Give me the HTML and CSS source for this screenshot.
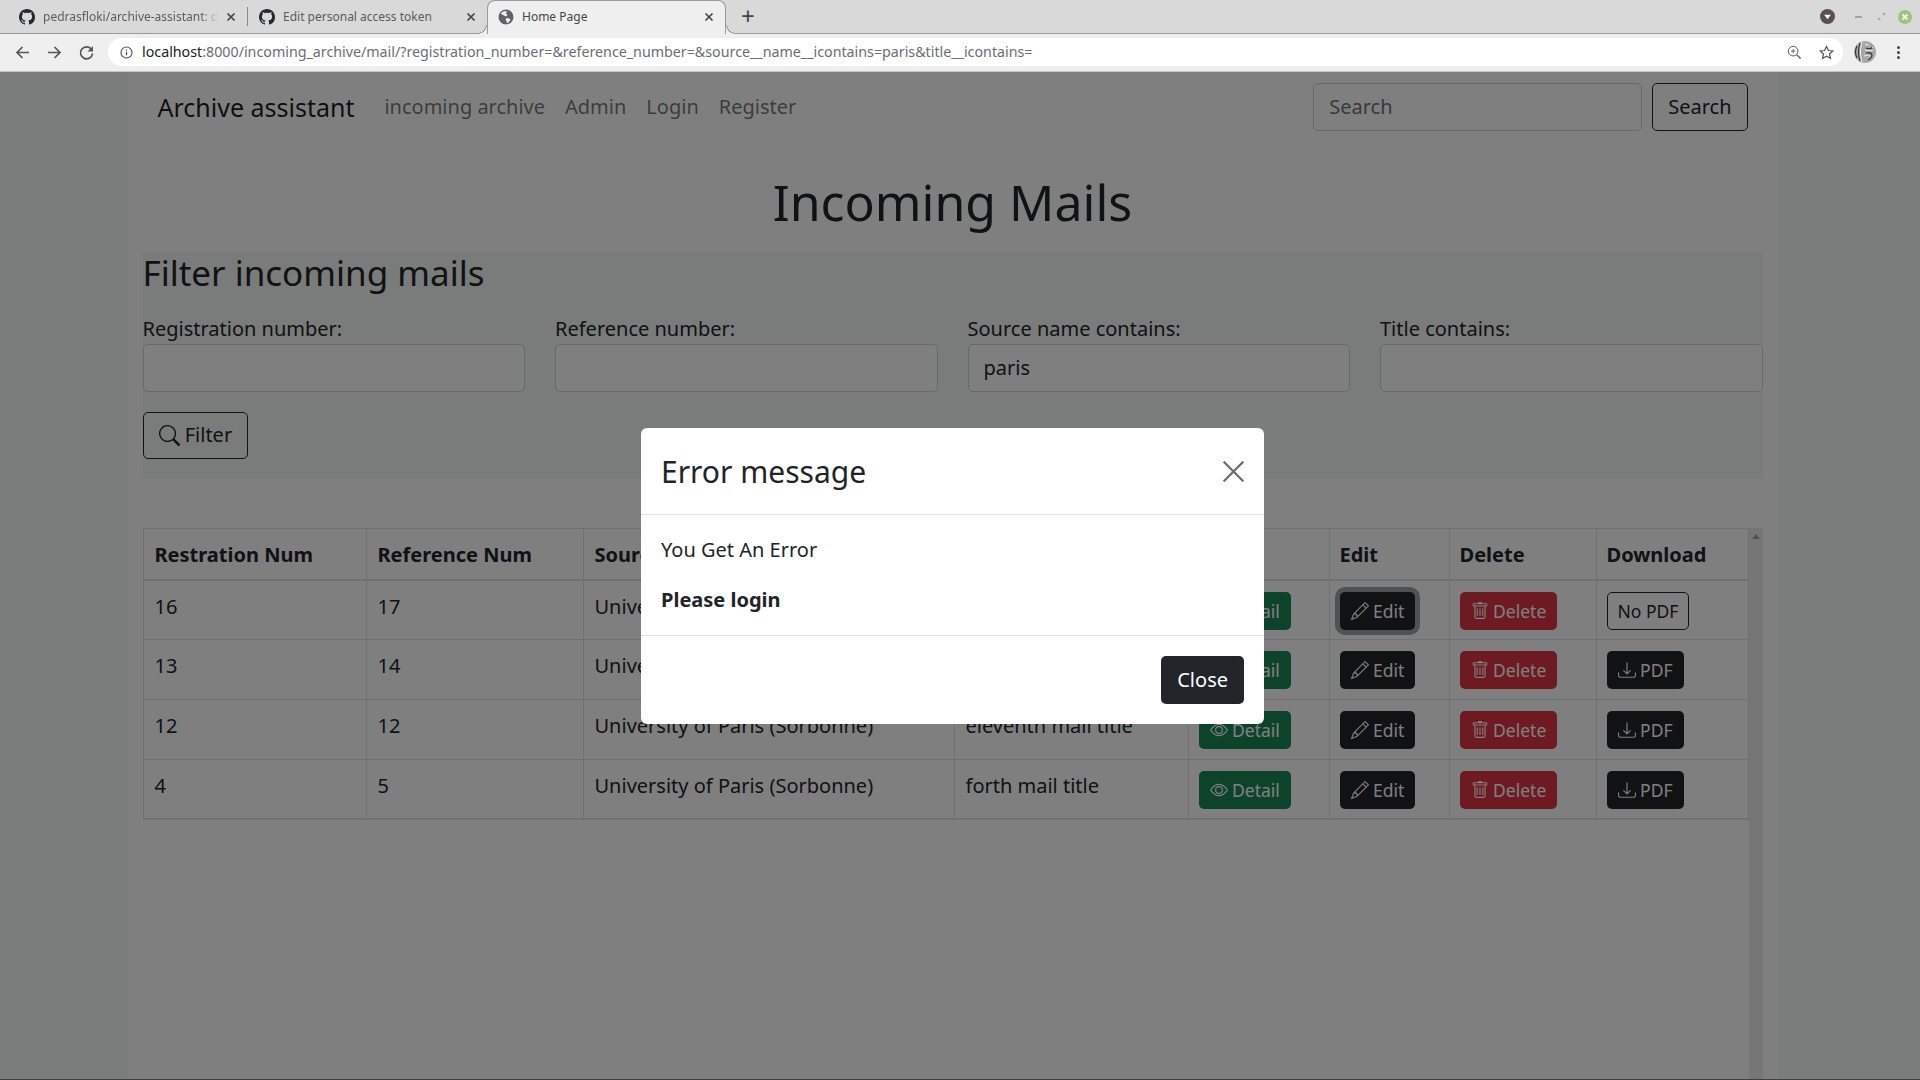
FILE: index.html
```html
<!DOCTYPE html>
<html lang="en">
<head>
  <meta charset="UTF-8">
  <title>Home Page</title>
  <link rel="stylesheet" href="styles.css">
</head>
<body>
  <svg class="sprites" width="0" height="0">
    <symbol id="i-github" viewBox="0 0 16 16"><path d="M8 0C3.58 0 0 3.58 0 8c0 3.54 2.29 6.53 5.47 7.59.4.07.55-.17.55-.38 0-.19-.01-.82-.01-1.49-2.01.37-2.53-.49-2.69-.94-.09-.23-.48-.94-.82-1.13-.28-.15-.68-.52-.01-.53.63-.01 1.08.58 1.23.82.72 1.21 1.87.87 2.33.66.07-.52.28-.87.51-1.07-1.78-.2-3.64-.89-3.64-3.95 0-.87.31-1.59.82-2.15-.08-.2-.36-1.02.08-2.12 0 0 .67-.21 2.2.82.64-.18 1.32-.27 2-.27.68 0 1.36.09 2 .27 1.53-1.04 2.2-.82 2.2-.82.44 1.1.16 1.92.08 2.12.51.56.82 1.27.82 2.15 0 3.07-1.87 3.75-3.65 3.95.29.25.54.73.54 1.48 0 1.07-.01 1.93-.01 2.2 0 .21.15.46.55.38A8.013 8.013 0 0016 8c0-4.42-3.58-8-8-8z"/></symbol>
    <symbol id="i-close" viewBox="0 0 10 10"><path d="M1.500 1.500l7 7M8.500 1.500l-7 7" fill="none" stroke="#444" stroke-width="1.700"/></symbol>
    <symbol id="i-search" viewBox="0 0 16 16"><path d="M11.742 10.344a6.5 6.5 0 1 0-1.397 1.398h-.001c.03.04.062.078.098.115l3.85 3.85a1 1 0 0 0 1.415-1.414l-3.85-3.85a1.007 1.007 0 0 0-.115-.1zM12 6.5a5.5 5.5 0 1 1-11 0 5.5 5.5 0 0 1 11 0z"/></symbol>
    <symbol id="i-pencil" viewBox="0 0 16 16"><path d="M12.146.146a.5.5 0 0 1 .708 0l3 3a.5.5 0 0 1 0 .708l-10 10a.5.5 0 0 1-.168.11l-5 2a.5.5 0 0 1-.65-.65l2-5a.5.5 0 0 1 .11-.168l10-10zM11.207 2.5 13.5 4.793 14.793 3.5 12.5 1.207 11.207 2.5zm1.586 3L10.5 3.207 4 9.707V10h.5a.5.5 0 0 1 .5.5v.5h.5a.5.5 0 0 1 .5.5v.5h.293l6.5-6.5zm-9.761 5.175-.106.106-1.528 3.821 3.821-1.528.106-.106A.5.5 0 0 1 5 12.5V12h-.5a.5.5 0 0 1-.5-.5V11h-.5a.5.5 0 0 1-.468-.325z"/></symbol>
    <symbol id="i-trash" viewBox="0 0 16 16"><path d="M5.5 5.5A.5.5 0 0 1 6 6v6a.5.5 0 0 1-1 0V6a.5.5 0 0 1 .5-.5zm2.5 0a.5.5 0 0 1 .5.5v6a.5.5 0 0 1-1 0V6a.5.5 0 0 1 .5-.5zm3 .5a.5.5 0 0 0-1 0v6a.5.5 0 0 0 1 0V6z"/><path fill-rule="evenodd" d="M14.5 3a1 1 0 0 1-1 1H13v9a2 2 0 0 1-2 2H5a2 2 0 0 1-2-2V4h-.5a1 1 0 0 1-1-1V2a1 1 0 0 1 1-1H6a1 1 0 0 1 1-1h2a1 1 0 0 1 1 1h3.5a1 1 0 0 1 1 1v1zM4.118 4 4 4.059V13a1 1 0 0 0 1 1h6a1 1 0 0 0 1-1V4.059L11.882 4H4.118zM2.5 3V2h11v1h-11z"/></symbol>
    <symbol id="i-eye" viewBox="0 0 16 16"><path d="M16 8s-3-5.5-8-5.5S0 8 0 8s3 5.5 8 5.5S16 8 16 8zM1.173 8a13.133 13.133 0 0 1 1.66-2.043C4.12 4.668 5.88 3.5 8 3.5c2.12 0 3.879 1.168 5.168 2.457A13.133 13.133 0 0 1 14.828 8c-.058.087-.122.183-.195.288-.335.48-.83 1.12-1.465 1.755C11.879 11.332 10.119 12.5 8 12.5c-2.12 0-3.879-1.168-5.168-2.457A13.134 13.134 0 0 1 1.172 8z"/><path d="M8 5.5a2.5 2.5 0 1 0 0 5 2.5 2.5 0 0 0 0-5zM4.5 8a3.5 3.5 0 1 1 7 0 3.5 3.5 0 0 1-7 0z"/></symbol>
    <symbol id="i-download" viewBox="0 0 16 16"><path d="M.5 9.9a.5.5 0 0 1 .5.5v2.5a1 1 0 0 0 1 1h12a1 1 0 0 0 1-1v-2.5a.5.5 0 0 1 1 0v2.5a2 2 0 0 1-2 2H2a2 2 0 0 1-2-2v-2.5a.5.5 0 0 1 .5-.5z"/><path d="M7.646 11.854a.5.5 0 0 0 .708 0l3-3a.5.5 0 0 0-.708-.708L8.5 10.293V1.5a.5.5 0 0 0-1 0v8.793L5.354 8.146a.5.5 0 1 0-.708.708l3 3z"/></symbol>
  </svg>

  <!-- Browser window -->
  <div class="tabstrip">
    <div class="tab">
      <svg class="tab-icon"><use href="#i-github"/></svg>
      <span class="tab-title tab-fade">pedrasfloki/archive-assistant: dj</span>
      <svg class="tab-close"><use href="#i-close"/></svg>
    </div>
    <div class="tab tab-sep">
      <svg class="tab-icon"><use href="#i-github"/></svg>
      <span class="tab-title">Edit personal access token</span>
      <svg class="tab-close"><use href="#i-close"/></svg>
    </div>
    <div class="tab tab-active">
      <svg class="tab-icon" viewBox="0 0 16 16"><circle cx="8" cy="8" r="7.500" fill="#5f6368"/><path d="M3.500 3.500l3-1.500 2.500.5-1 2 1.500 1.500-1.500 1.500-3-1.500-2-1zM8.500 9l3 .5 1 1.500-2 2.500-1.500.5-.5-2-1-1z" fill="#efefef"/></svg>
      <span class="tab-title">Home Page</span>
      <svg class="tab-close"><use href="#i-close"/></svg>
    </div>
    <span class="new-tab">+</span>
    <div class="window-controls">
      <svg class="tab-search" viewBox="0 0 16 16"><circle cx="8" cy="8" r="8" fill="#5b5050"/><path d="M4.500 6h7L8 11z" fill="#fff"/></svg>
      <span class="win-min"></span>
      <svg class="win-max" viewBox="0 0 8 8"><path d="M4.500 0H8v3.500zM3.500 8H0V4.500z" fill="#a4a4a4"/></svg>
      <svg class="win-close" viewBox="0 0 14 14"><circle cx="7" cy="7" r="7" fill="#9cc47f"/><path d="M4.500 4.500l5 5M9.500 4.500l-5 5" stroke="#f2f6ee" stroke-width="1.800"/></svg>
    </div>
  </div>
  <div class="toolbar">
    <svg class="tool" viewBox="0 0 17 17"><path d="M15 8.500H3M8.500 3l-5.500 5.500 5.500 5.500" fill="none" stroke="#555" stroke-width="1.700"/></svg>
    <svg class="tool" viewBox="0 0 17 17"><path d="M2 8.500h12M8.500 3l5.500 5.500-5.500 5.500" fill="none" stroke="#555" stroke-width="1.700"/></svg>
    <svg class="tool" viewBox="0 0 17 17"><path d="M13.500 5.500A6 6 0 1 0 14.500 9.500" fill="none" stroke="#555" stroke-width="1.700"/><path d="M15 2v5.500H9.500z" fill="#555"/></svg>
    <div class="urlbar">
      <svg class="url-info" viewBox="0 0 16 16"><circle cx="8" cy="8" r="6.800" fill="none" stroke="#555" stroke-width="1.400"/><path d="M8 7v4.500M8 4.200v1.600" stroke="#555" stroke-width="1.600"/></svg>
      <span class="url-text"><span class="url-host">localhost</span>:8000/incoming_archive/mail/?registration_number=&amp;reference_number=&amp;source__name__icontains=paris&amp;title__icontains=</span>
      <svg class="url-zoom" viewBox="0 0 16 16"><circle cx="7" cy="7" r="5.500" fill="none" stroke="#555" stroke-width="1.100"/><path d="M11 11l4.500 4.500" stroke="#555" stroke-width="1.500"/><path d="M7 4.500v5M4.500 7h5" stroke="#555"/></svg>
      <svg class="url-star" viewBox="0 0 16 16"><path d="M8 1.500l2 4.400 4.700.5-3.500 3.200 1 4.700L8 11.900l-4.200 2.400 1-4.700L1.300 6.400 6 5.900z" fill="none" stroke="#555" stroke-width="1.300"/></svg>
    </div>
    <svg class="avatar" viewBox="0 0 22 22"><circle cx="11" cy="11" r="11" fill="#a8a8a8"/><path d="M3 5c-2 4-2 8 0 12M6 2c-2 6-2 12 0 18M15 4c2 0 3 1 3 3-2 1-4 1-6 0M12 12c3-1 6 0 6 2s-2 4-4 5" fill="none" stroke="#333" stroke-width="1.100"/><path d="M8 1c-2 6-2 14 0 20M11 4c3-1 6 0 8 3M11 9c3 1 6 1 8 0M10 15c2-1 4-1 6 0" fill="none" stroke="#f2f2f2" stroke-width="1"/></svg>
    <span class="kebab"><i></i><i></i><i></i></span>
  </div>

  <!-- Page -->
  <div class="viewport">
    <div class="container">
      <nav class="navbar">
        <a class="brand">Archive assistant</a>
        <a class="nav-link">incoming archive</a>
        <a class="nav-link">Admin</a>
        <a class="nav-link">Login</a>
        <a class="nav-link">Register</a>
        <form class="nav-search">
          <input class="form-control nav-input" placeholder="Search">
          <button class="btn btn-outline" type="button">Search</button>
        </form>
      </nav>

      <h1 class="page-title">Incoming Mails</h1>

      <section class="filter">
        <h2>Filter incoming mails</h2>
        <div class="filter-row">
          <label>Registration number:<input class="form-control"></label>
          <label>Reference number:<input class="form-control"></label>
          <label>Source name contains:<input class="form-control" value="paris"></label>
          <label>Title contains:<input class="form-control"></label>
        </div>
        <button class="btn btn-outline btn-filter" type="button"><svg class="bi bi-lg"><use href="#i-search"/></svg> Filter</button>
      </section>

      <div class="table-wrap">
        <table class="mail-table">
          <colgroup>
            <col class="c1"><col class="c2"><col class="c3"><col class="c4"><col class="c5"><col class="c6"><col class="c7"><col class="c8">
          </colgroup>
          <thead>
            <tr><th>Restration Num</th><th>Reference Num</th><th>Source name</th><th>Title</th><th>Detail</th><th>Edit</th><th>Delete</th><th>Download</th></tr>
          </thead>
          <tbody>
            <tr>
              <td>16</td><td>17</td><td>University of Paris (Sorbonne)</td><td>seventeenth mail title</td>
              <td><a class="btn btn-sm btn-green"><svg class="bi"><use href="#i-eye"/></svg> Detail</a></td>
              <td><a class="btn btn-sm btn-dark btn-focus"><svg class="bi"><use href="#i-pencil"/></svg> Edit</a></td>
              <td><a class="btn btn-sm btn-red"><svg class="bi"><use href="#i-trash"/></svg> Delete</a></td>
              <td><a class="btn btn-sm btn-outline">No PDF</a></td>
            </tr>
            <tr>
              <td>13</td><td>14</td><td>University of Paris (Sorbonne)</td><td>fourteenth mail title</td>
              <td><a class="btn btn-sm btn-green"><svg class="bi"><use href="#i-eye"/></svg> Detail</a></td>
              <td><a class="btn btn-sm btn-dark"><svg class="bi"><use href="#i-pencil"/></svg> Edit</a></td>
              <td><a class="btn btn-sm btn-red"><svg class="bi"><use href="#i-trash"/></svg> Delete</a></td>
              <td><a class="btn btn-sm btn-dark"><svg class="bi"><use href="#i-download"/></svg> PDF</a></td>
            </tr>
            <tr>
              <td>12</td><td>12</td><td>University of Paris (Sorbonne)</td><td>eleventh mail title</td>
              <td><a class="btn btn-sm btn-green"><svg class="bi"><use href="#i-eye"/></svg> Detail</a></td>
              <td><a class="btn btn-sm btn-dark"><svg class="bi"><use href="#i-pencil"/></svg> Edit</a></td>
              <td><a class="btn btn-sm btn-red"><svg class="bi"><use href="#i-trash"/></svg> Delete</a></td>
              <td><a class="btn btn-sm btn-dark"><svg class="bi"><use href="#i-download"/></svg> PDF</a></td>
            </tr>
            <tr>
              <td>4</td><td>5</td><td>University of Paris (Sorbonne)</td><td>forth mail title</td>
              <td><a class="btn btn-sm btn-green"><svg class="bi"><use href="#i-eye"/></svg> Detail</a></td>
              <td><a class="btn btn-sm btn-dark"><svg class="bi"><use href="#i-pencil"/></svg> Edit</a></td>
              <td><a class="btn btn-sm btn-red"><svg class="bi"><use href="#i-trash"/></svg> Delete</a></td>
              <td><a class="btn btn-sm btn-dark"><svg class="bi"><use href="#i-download"/></svg> PDF</a></td>
            </tr>
          </tbody>
        </table>
        <div class="scrollbar"><span class="scroll-up"></span></div>
      </div>
    </div>

    <!-- Error modal -->
    <div class="backdrop">
      <div class="modal">
        <div class="modal-header">
          <h5>Error message</h5>
          <svg class="modal-x" viewBox="0 0 16 16"><path d="M.5.5l15 15M15.500.5l-15 15" stroke="#6b6b6b" stroke-width="1.700"/></svg>
        </div>
        <div class="modal-body">
          <p>You Get An Error</p>
          <p><strong>Please login</strong></p>
        </div>
        <div class="modal-footer">
          <button class="btn btn-dark" type="button">Close</button>
        </div>
      </div>
    </div>
  </div>
</body>
</html>
```

FILE: styles.css
```css
* {
  box-sizing: border-box;
}
html, body {
  height: 100%;
}
body {
  margin: 0;
  overflow: hidden;
  font-family: "Noto Sans", sans-serif;
  font-size: 20px;
  line-height: 1.5;
  color: #212529;
  background-color: #f7faf8;
}
.sprites {
  position: absolute;
}

/* Browser chrome */
.tabstrip {
  display: flex;
  align-items: stretch;
  height: 34px;
  padding-left: 7px;
  background-color: #d9d9d9;
  border-bottom: 1px solid #9a9a9a;
  font-size: 12px;
  color: #5c5c5c;
}
.tab {
  display: flex;
  align-items: center;
  width: 240px;
  padding: 0 9px 0 12px;
  position: relative;
}
.tab-sep::before {
  content: "";
  position: absolute;
  left: 0;
  top: 7px;
  bottom: 7px;
  width: 1px;
  background-color: #8a8a8a;
}
.tab-active {
  width: 239px;
  height: 34px;
  padding-left: 10px;
  padding-bottom: 1px;
  background-color: #efefef;
  border: 1px solid #9a9a9a;
  border-bottom: none;
  border-radius: 8px 8px 0 0;
  color: #454545;
}
.tab-active::before, .tab-active::after {
  content: "";
  position: absolute;
  bottom: 0;
  width: 9px;
  height: 9px;
}
.tab-active::before {
  left: -10px;
  background: radial-gradient(circle at 0 0, #d9d9d9 7.5px, #9a9a9a 8px, #9a9a9a 8.5px, #efefef 9px);
}
.tab-active::after {
  right: -10px;
  background: radial-gradient(circle at 100% 0, #d9d9d9 7.5px, #9a9a9a 8px, #9a9a9a 8.5px, #efefef 9px);
}
.tab-icon {
  width: 16px;
  height: 16px;
  flex: none;
  fill: #24292e;
}
.tab-title {
  flex: 1;
  margin-left: 8px;
  white-space: nowrap;
  overflow: hidden;
}
.tab-fade {
  margin-right: 4px;
  -webkit-mask-image: linear-gradient(to left, transparent 2px, #000 20px);
  mask-image: linear-gradient(to left, transparent 2px, #000 20px);
}
.tab-close {
  width: 10px;
  height: 10px;
  margin: 0 2px;
  flex: none;
}
.new-tab {
  margin-left: 15px;
  font-size: 24px;
  line-height: 32px;
  color: #444;
}
.window-controls {
  display: flex;
  align-items: center;
  margin-left: auto;
  padding-right: 8px;
}
.tab-search {
  width: 15px;
  height: 15px;
  margin-right: 20px;
}
.win-min {
  width: 7px;
  height: 2px;
  margin-right: 16px;
  background-color: #a4a4a4;
}
.win-max {
  width: 7px;
  height: 7px;
  margin-right: 13px;
}
.win-close {
  width: 14px;
  height: 14px;
}
.toolbar {
  display: flex;
  align-items: center;
  height: 38px;
  padding: 0 20px 1px 14px;
  background-color: #efefef;
  border-bottom: 1px solid #c4c4c4;
}
.tool {
  width: 17px;
  height: 17px;
  margin-right: 15px;
  flex: none;
}
.urlbar {
  display: flex;
  align-items: center;
  flex: 1;
  height: 28px;
  margin-left: -2px;
  padding: 0 9px 0 12px;
  border-radius: 14px;
  background-color: #fff;
  font-size: 14.25px;
  color: #6a6e73;
}
.url-info {
  width: 13px;
  height: 13px;
  margin-right: 9px;
}
.url-text {
  flex: 1;
  white-space: nowrap;
}
.url-host {
  color: #202124;
}
.url-zoom {
  width: 14px;
  height: 14px;
  margin-right: 18px;
}
.url-star {
  width: 15px;
  height: 15px;
}
.avatar {
  width: 22px;
  height: 22px;
  margin: 0 21px 0 11px;
  flex: none;
}
.kebab {
  display: flex;
  flex-direction: column;
  gap: 2px;
}
.kebab i {
  width: 3px;
  height: 3px;
  border-radius: 50%;
  background-color: #444;
}

/* Page */
.viewport {
  position: relative;
  height: calc(100% - 72px);
  padding-right: 15px;
  overflow: hidden;
}
.container {
  display: flex;
  flex-direction: column;
  width: 1650px;
  height: 100%;
  margin: 0 auto;
  padding: 0 15px;
  background-color: #fff;
}
.navbar {
  display: flex;
  align-items: center;
  padding: 11px 15px 10px 15px;
}
.brand {
  margin-right: 20px;
  padding-top: 2px;
  font-size: 25px;
  line-height: 1.5;
  color: rgba(0, 0, 0, .9);
}
.nav-link {
  padding: 0 10px;
  color: rgba(0, 0, 0, .55);
}
.nav-search {
  display: flex;
  gap: 10px;
  margin-left: auto;
}
.form-control {
  display: block;
  width: 100%;
  height: 48px;
  padding: 6px 15px 8px;
  border: 1px solid #ced4da;
  border-radius: 5px;
  background-color: #fff;
  font: inherit;
  color: #212529;
}
.form-control::placeholder {
  color: #6c757d;
}
.nav-input {
  width: 329px;
}
.btn {
  display: inline-block;
  padding: 8px 15px;
  border: 1px solid transparent;
  border-radius: 5px;
  background: none;
  font: inherit;
  color: #212529;
  vertical-align: middle;
}
.btn-outline {
  border-color: #212529;
}
.btn-dark {
  background-color: #212529;
  color: #fff;
}
.btn-green {
  background-color: #198754;
  color: #fff;
}
.btn-red {
  background-color: #dc3545;
  color: #fff;
}
.btn-sm {
  height: 38px;
  padding: 3px 10px;
  font-size: 17.5px;
  line-height: 30px;
  vertical-align: top;
}
.btn-focus {
  box-shadow: 0 0 0 5px rgba(66, 70, 73, .5);
}
.btn-filter {
  height: 47px;
  padding-top: 6px;
}
.bi {
  display: inline-block;
  width: 18px;
  height: 18px;
  vertical-align: -2px;
  fill: currentColor;
}
.bi-lg {
  width: 21px;
  height: 21px;
  vertical-align: -4px;
}
.page-title {
  margin: 31px 0 20px;
  font-size: 50px;
  font-weight: 400;
  line-height: 1.2;
  text-align: center;
}
.filter {
  height: 226px;
  flex: none;
  background-color: #f5f7f6;
}
.filter h2 {
  margin: 0 0 20px;
  font-size: 35px;
  font-weight: 400;
  line-height: 1.2;
}
.filter-row {
  display: grid;
  grid-template-columns: repeat(4, 1fr);
  gap: 30px;
  margin-bottom: 20px;
}
.table-wrap {
  display: flex;
  flex: 1;
  align-items: stretch;
  margin-top: 50px;
}
.mail-table {
  align-self: flex-start;
  width: 1605px;
  table-layout: fixed;
  border-collapse: collapse;
  color: #212529;
}
.c1 { width: 223px; }
.c2 { width: 217px; }
.c3 { width: 371px; }
.c4 { width: 234px; }
.c5 { width: 141px; }
.c6 { width: 120px; }
.c7 { width: 147px; }
.c8 { width: 152px; }
.mail-table th, .mail-table td {
  padding: 11px 10px 9px;
  border: 1px solid #dee2e6;
  text-align: left;
  vertical-align: top;
  white-space: nowrap;
}
.mail-table th:nth-child(-n+4), .mail-table td:nth-child(-n+4) {
  padding-left: 11px;
}
.mail-table th {
  font-weight: 700;
  border-bottom-width: 2px;
}
.mail-table td {
  height: 59.7px;
}
.mail-table tbody tr:last-child td {
  border-bottom-width: 2px;
}
.scrollbar {
  width: 15px;
  background-color: #ededed;
  position: relative;
}
.scroll-up {
  position: absolute;
  top: 6px;
  left: 3.5px;
  border: 4px solid transparent;
  border-top: none;
  border-bottom: 5px solid #a3a3a3;
}

/* Modal */
.backdrop {
  position: absolute;
  inset: 0;
  display: flex;
  align-items: center;
  justify-content: center;
  padding-right: 15px;
  background-color: rgba(0, 0, 0, .5);
}
.backdrop::after {
  content: "";
  position: absolute;
  left: 0;
  right: 0;
  bottom: 0;
  height: 1px;
  background-color: #404040;
}
.modal {
  width: 623px;
  border-radius: 6px;
  background-color: #fff;
}
.modal-header {
  display: flex;
  align-items: center;
  justify-content: space-between;
  padding: 21px 20px 20px;
  border-bottom: 1px solid #dee2e6;
}
.modal-header h5 {
  margin: 0;
  font-size: 30px;
  font-weight: 400;
  line-height: 1.5;
}
.modal-x {
  width: 21px;
  height: 21px;
}
.modal-body {
  padding: 20px;
}
.modal-body p {
  margin: 0 0 20px;
}
.modal-body p:last-child {
  margin-bottom: 0;
}
.modal-body strong {
  font-weight: 700;
}
.modal-footer {
  display: flex;
  justify-content: flex-end;
  padding: 20px;
  border-top: 1px solid #dee2e6;
}
```
